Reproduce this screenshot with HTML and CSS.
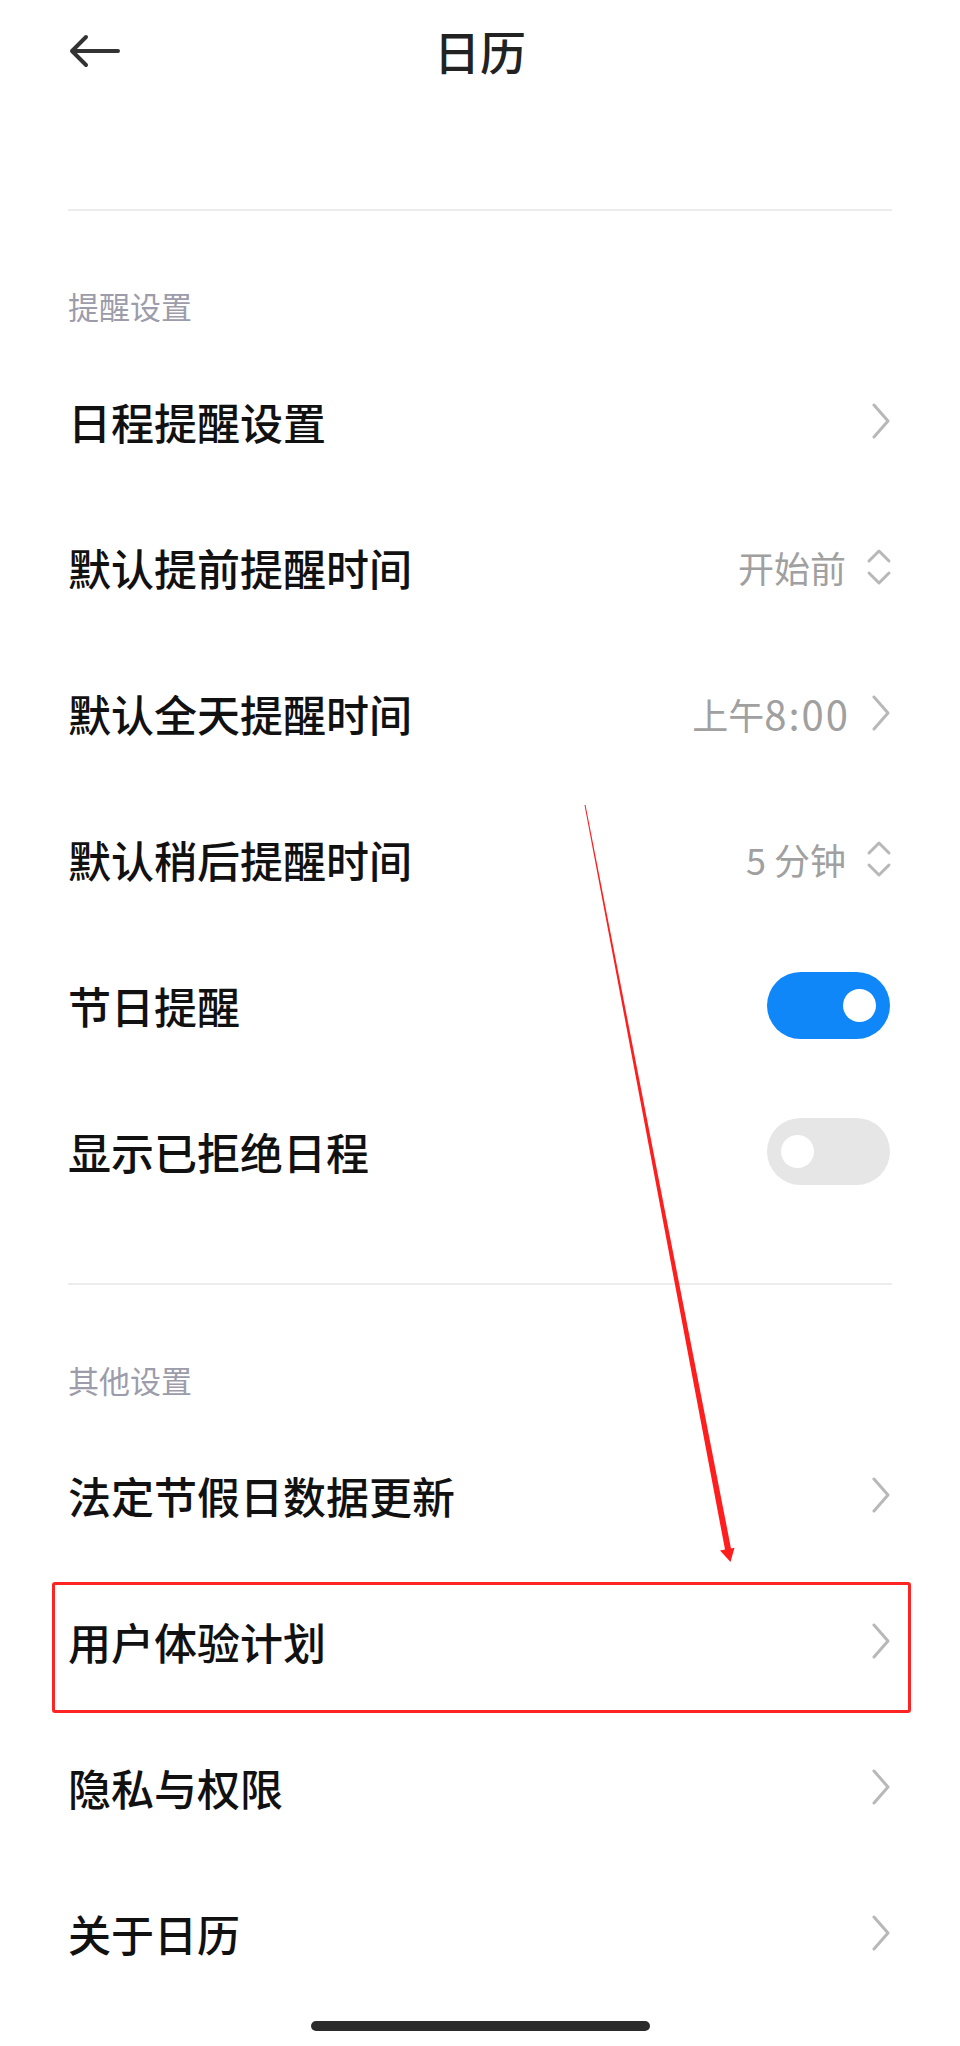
FILE: index.html
```html
<!DOCTYPE html>
<html lang="zh-CN">
<head>
    <meta charset="UTF-8">
    <meta name="viewport" content="width=device-width, initial-scale=1.0">
    <title>日历设置</title>
    <link rel="stylesheet" href="styles.css">
</head>
<body>
    <div class="page">
        <header class="topbar">
            <svg class="back" viewBox="0 0 56 36" width="56" height="36">
                <path d="M52 18 H8 M20 4 L6 18 L20 32" fill="none" stroke="#333" stroke-width="4" stroke-linecap="round" stroke-linejoin="round"/>
            </svg>
            <h1 class="title">日历</h1>
            <span></span>
        </header>

        <div class="divider first"></div>

        <section class="group">
            <div class="group-title">提醒设置</div>

            <div class="row">
                <span class="row-label">日程提醒设置</span>
                <span class="row-end">
                    <svg class="chevron" viewBox="0 0 20 36" width="20" height="36"><path d="M3 2 L17 18 L3 34" /></svg>
                </span>
            </div>

            <div class="row">
                <span class="row-label">默认提前提醒时间</span>
                <span class="row-end">
                    <span class="value">开始前</span>
                    <svg class="updown" viewBox="0 0 26 38" width="26" height="38"><path d="M3 13 L13 3 L23 13 M3 25 L13 35 L23 25" /></svg>
                </span>
            </div>

            <div class="row">
                <span class="row-label">默认全天提醒时间</span>
                <span class="row-end">
                    <span class="value">上午<span class="num">8:00</span></span>
                    <svg class="chevron" viewBox="0 0 20 36" width="20" height="36"><path d="M3 2 L17 18 L3 34" /></svg>
                </span>
            </div>

            <div class="row">
                <span class="row-label">默认稍后提醒时间</span>
                <span class="row-end">
                    <span class="value">5 分钟</span>
                    <svg class="updown" viewBox="0 0 26 38" width="26" height="38"><path d="M3 13 L13 3 L23 13 M3 25 L13 35 L23 25" /></svg>
                </span>
            </div>

            <div class="row">
                <span class="row-label">节日提醒</span>
                <span class="switch on"><span class="knob"></span></span>
            </div>

            <div class="row">
                <span class="row-label">显示已拒绝日程</span>
                <span class="switch"><span class="knob"></span></span>
            </div>
        </section>

        <div class="divider"></div>

        <section class="group">
            <div class="group-title">其他设置</div>

            <div class="row">
                <span class="row-label">法定节假日数据更新</span>
                <span class="row-end">
                    <svg class="chevron" viewBox="0 0 20 36" width="20" height="36"><path d="M3 2 L17 18 L3 34" /></svg>
                </span>
            </div>

            <div class="row marked">
                <span class="row-label">用户体验计划</span>
                <span class="row-end">
                    <svg class="chevron" viewBox="0 0 20 36" width="20" height="36"><path d="M3 2 L17 18 L3 34" /></svg>
                </span>
                <span class="mark-box"></span>
            </div>

            <div class="row">
                <span class="row-label">隐私与权限</span>
                <span class="row-end">
                    <svg class="chevron" viewBox="0 0 20 36" width="20" height="36"><path d="M3 2 L17 18 L3 34" /></svg>
                </span>
            </div>

            <div class="row">
                <span class="row-label">关于日历</span>
                <span class="row-end">
                    <svg class="chevron" viewBox="0 0 20 36" width="20" height="36"><path d="M3 2 L17 18 L3 34" /></svg>
                </span>
            </div>
        </section>

        <div class="home-bar"></div>
    </div>

    <!-- annotation arrow drawn over the screenshot -->
    <svg class="annotation" viewBox="0 0 960 2046" width="960" height="2046">
        <polygon points="584.5,805.1 585.5,804.9 731,1548.4 734.5,1547.8 730.5,1562 720,1550.5 725,1549.6" fill="#ff1e1e"/>
    </svg>
</body>
</html>
```

FILE: styles.css
```css
body {
    margin: 0;
    background-color: #fff;
    font-family: "Noto Sans CJK SC", "Noto Sans", sans-serif;
    color: #111;
    position: relative;
}

.page {
    padding: 0 68px;
    display: flex;
    flex-direction: column;
}

.topbar {
    height: 100px;
    display: grid;
    grid-template-columns: 1fr auto 1fr;
    align-items: center;
}

.back {
    margin-left: -2px;
    margin-top: 2px;
}

.title {
    margin: 0;
    font-size: 46px;
    font-weight: 500;
    color: #222;
    line-height: 1;
}

.divider {
    height: 2px;
    background-color: #ececec;
    margin-top: 59px;
}

.divider.first {
    margin-top: 109px;
}

.group {
    padding-top: 75px;
    display: flex;
    flex-direction: column;
}

.group-title {
    font-size: 31px;
    line-height: 40px;
    color: #9c9cab;
    margin-bottom: 22px;
}

.row {
    height: 146px;
    display: flex;
    align-items: center;
    justify-content: space-between;
}

.row-label {
    font-size: 43px;
    font-weight: 500;
    line-height: 1;
    color: #111;
}

.row-end {
    display: flex;
    align-items: center;
    gap: 20px;
}

.value {
    font-size: 36px;
    color: #a0a0a0;
    line-height: 1;
    white-space: nowrap;
}

.num {
    font-size: 40px;
    letter-spacing: 2px;
    margin-right: -2px;
}

.chevron path,
.updown path {
    fill: none;
    stroke: #b8b8b8;
    stroke-width: 3;
    stroke-linecap: round;
    stroke-linejoin: round;
}

.chevron {
    margin-right: 1px;
}

.row-end .value + .chevron {
    margin-left: 3px;
}

.switch {
    width: 123px;
    height: 67px;
    border-radius: 34px;
    background-color: #e6e6e6;
    display: flex;
    align-items: center;
    padding: 0 14px;
    box-sizing: border-box;
    margin-right: 2px;
}

.switch.on {
    background-color: #0f87f9;
    justify-content: flex-end;
}

.knob {
    width: 33px;
    height: 33px;
    border-radius: 50%;
    background-color: #fff;
}

.marked {
    position: relative;
}

.mark-box {
    position: absolute;
    left: -16px;
    right: -19px;
    top: 14px;
    bottom: 1px;
    border: 3px solid #ff2424;
    border-radius: 3px;
}

.home-bar {
    align-self: center;
    width: 339px;
    height: 10px;
    border-radius: 5px;
    background-color: #2b2b2b;
    margin-top: 15px;
}

.annotation {
    position: absolute;
    top: 0;
    left: 0;
    pointer-events: none;
}
```
